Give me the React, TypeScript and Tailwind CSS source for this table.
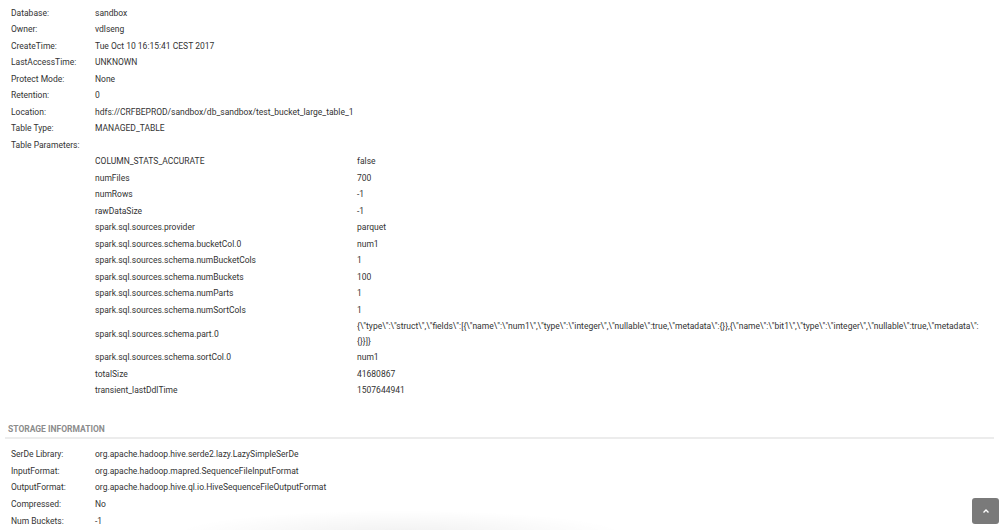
import React from 'react';

const general: [string, string][] = [
  ['Database:', 'sandbox'],
  ['Owner:', 'vdlseng'],
  ['CreateTime:', 'Tue Oct 10 16:15:41 CEST 2017'],
  ['LastAccessTime:', 'UNKNOWN'],
  ['Protect Mode:', 'None'],
  ['Retention:', '0'],
  ['Location:', 'hdfs://CRFBEPROD/sandbox/db_sandbox/test_bucket_large_table_1'],
  ['Table Type:', 'MANAGED_TABLE'],
  ['Table Parameters:', ''],
];

const params: [string, string][] = [
  ['COLUMN_STATS_ACCURATE', 'false'],
  ['numFiles', '700'],
  ['numRows', '-1'],
  ['rawDataSize', '-1'],
  ['spark.sql.sources.provider', 'parquet'],
  ['spark.sql.sources.schema.bucketCol.0', 'num1'],
  ['spark.sql.sources.schema.numBucketCols', '1'],
  ['spark.sql.sources.schema.numBuckets', '100'],
  ['spark.sql.sources.schema.numParts', '1'],
  ['spark.sql.sources.schema.numSortCols', '1'],
  [
    'spark.sql.sources.schema.part.0',
    '{\\"type\\":\\"struct\\",\\"fields\\":[{\\"name\\":\\"num1\\",\\"type\\":\\"integer\\",\\"nullable\\":true,\\"metadata\\":{}},{\\"name\\":\\"bit1\\",\\"type\\":\\"integer\\",\\"nullable\\":true,\\"metadata\\":{}}]}',
  ],
  ['spark.sql.sources.schema.sortCol.0', 'num1'],
  ['totalSize', '41680867'],
  ['transient_lastDdlTime', '1507644941'],
];

const storage: [string, string][] = [
  ['SerDe Library:', 'org.apache.hadoop.hive.serde2.lazy.LazySimpleSerDe'],
  ['InputFormat:', 'org.apache.hadoop.mapred.SequenceFileInputFormat'],
  ['OutputFormat:', 'org.apache.hadoop.hive.ql.io.HiveSequenceFileOutputFormat'],
  ['Compressed:', 'No'],
  ['Num Buckets:', '-1'],
];

const Row: React.FC<{ label: string; value: string; tall?: boolean }> = ({ label, value, tall }) => (
  <div className={tall ? 'flex h-[16.75px] items-center pl-[11px]' : 'flex h-[16.5px] items-center pl-[11px]'}>
    <div className="w-[84px] shrink-0">{label}</div>
    <div>{value}</div>
  </div>
);

const App: React.FC = () => {
  return (
    <div
      className="relative h-[530px] w-[999px] overflow-hidden bg-white text-[8.5px] text-[#333]"
      style={{ fontFamily: 'Roboto, "Helvetica Neue", Arial, sans-serif' }}
    >
      <div className="pt-[5px]">
        {general.map(([l, v]) => (
          <Row key={l} label={l} value={v} />
        ))}
        <div className="pl-[95px]">
          {params.map(([k, v]) => (
            <div key={k} className="flex min-h-[16.5px] items-center">
              <div className="w-[262px] shrink-0">{k}</div>
              <div className="w-[633px] break-all py-[0.5px] leading-[15px]">{v}</div>
            </div>
          ))}
        </div>
      </div>

      <div className="mt-[24px] px-[5px]">
        <div className="border-b-2 border-[#ececec] pb-[1px] pl-[3px] text-[8.5px] font-bold text-[#8c8c8c]">
          STORAGE INFORMATION
        </div>
      </div>

      <div className="pt-[7px]">
        {storage.map(([l, v]) => (
          <Row key={l} label={l} value={v} tall />
        ))}
      </div>

      <div className="pointer-events-none absolute bottom-[-30px] left-[170px] h-[50px] w-[460px] rounded-[50%] bg-[radial-gradient(ellipse_at_center,rgba(0,0,0,0.06),rgba(0,0,0,0)_70%)]" />

      <button className="absolute right-0 top-[498px] flex h-[26px] w-[27px] items-center justify-center rounded-[3px] bg-[#7a7a7a]">
        <svg width="8" height="6" viewBox="0 0 8 6" fill="none">
          <path d="M1.5 4.5 L4 2 L6.5 4.5" stroke="white" strokeWidth="1.4" />
        </svg>
      </button>
    </div>
  );
};

export default App;
